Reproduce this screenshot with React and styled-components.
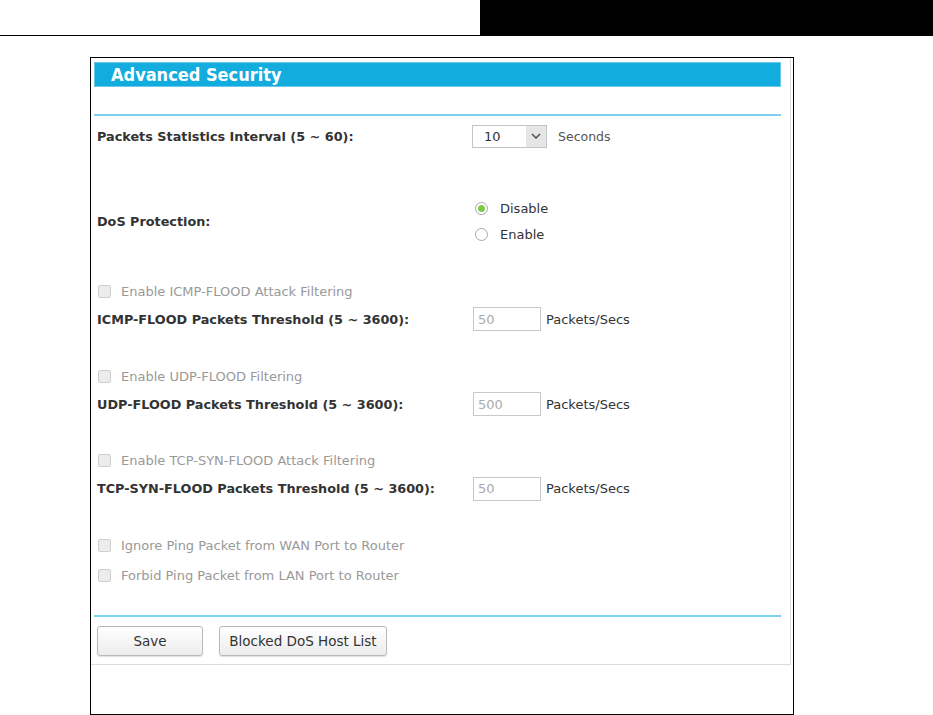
import React from 'react';
import styled, { createGlobalStyle } from 'styled-components';

const GlobalStyle = createGlobalStyle`
  body {
    margin: 0;
    background: #ffffff;
    font-family: "DejaVu Sans", "Liberation Sans", sans-serif;
  }
`;

const TopBar = styled.div`
  display: flex;
  height: 36px;
`;

const TopLeft = styled.div`
  width: 480px;
  border-bottom: 1px solid #000;
`;

const TopRight = styled.div`
  flex: 1;
  background: #000;
`;

const Frame = styled.div`
  margin: 21px 0 0 90px;
  width: 702px;
  height: 656px;
  border: 1px solid #000;
`;

const Inner = styled.div`
  width: 699px;
  height: 606px;
  border-right: 1px solid #dcdcdc;
  border-bottom: 1px solid #dcdcdc;
  display: flex;
  flex-direction: column;
`;

const Header = styled.div`
  margin: 4px 9px 0 3px;
  height: 25px;
  box-sizing: border-box;
  background: #12acdf;
  border: 1px solid #6cc9ec;
  color: #fff;
  font-family: "DejaVu Sans Condensed", "DejaVu Sans", sans-serif;
  font-weight: bold;
  font-size: 18px;
  display: flex;
  align-items: center;
  padding-left: 16px;
`;

const Divider = styled.div`
  margin: ${p => p.$top}px 9px 0 3px;
  height: 2px;
  background: #7dd0f0;
`;

const Row = styled.div`
  display: flex;
  align-items: center;
  height: ${p => p.$h || 28}px;
  margin-top: ${p => p.$top || 0}px;
  padding-left: 6px;
`;

const Label = styled.div`
  width: 375px;
  flex-shrink: 0;
  font-weight: bold;
  font-size: 12.8px;
  color: #333;
`;

const Controls = styled.div`
  display: flex;
  flex-direction: ${p => (p.$column ? 'column' : 'row')};
  align-items: ${p => (p.$column ? 'flex-start' : 'center')};
`;

const SelectBox = styled.div`
  display: flex;
  width: 75px;
  height: 23px;
  box-sizing: border-box;
  border: 1px solid #c4c4c4;
  font-size: 13px;
  color: #333;
`;

const SelectValue = styled.div`
  flex: 1;
  display: flex;
  align-items: center;
  padding-left: 11px;
`;

const SelectArrow = styled.div`
  width: 20px;
  background: #e6e6e6;
  display: flex;
  align-items: center;
  justify-content: center;
`;

const Unit = styled.span`
  font-size: ${p => (p.$dark ? 13 : 12.5)}px;
  color: ${p => (p.$dark ? '#333' : '#555')};
  margin-left: ${p => p.$gap}px;
`;

const RadioLine = styled.label`
  display: flex;
  align-items: center;
  height: 26px;
  padding-left: 3px;
  font-size: 13px;
  color: #333;
`;

const RadioDot = styled.span`
  width: 11px;
  height: 11px;
  border-radius: 50%;
  border: 1px solid #a8a8a8;
  background: #fff;
  margin-right: 12px;
  display: flex;
  align-items: center;
  justify-content: center;

  &::after {
    content: '';
    width: 7px;
    height: 7px;
    border-radius: 50%;
    background: ${p => (p.$on ? '#7ccb48' : 'transparent')};
  }
`;

const CheckLine = styled.label`
  display: flex;
  align-items: center;
  height: ${p => p.$h || 28}px;
  margin-top: ${p => p.$top || 0}px;
  padding-left: 7px;
  font-size: 13px;
  color: #999;
`;

const CheckBox = styled.span`
  width: 11px;
  height: 11px;
  border: 1px solid #cfcfcf;
  border-radius: 2px;
  background: #ececec;
  margin-right: 10px;
`;

const NumInput = styled.div`
  width: 68px;
  height: 24px;
  box-sizing: border-box;
  border: 1px solid #c8c8c8;
  margin-left: 1px;
  font-size: 13px;
  color: #aaa;
  display: flex;
  align-items: center;
  padding-left: 4px;
`;

const ButtonBar = styled.div`
  display: flex;
  gap: 16px;
  margin-top: 9px;
  padding-left: 6px;
`;

const Button = styled.button`
  width: ${p => p.$w}px;
  height: 30px;
  border: 1px solid #b9b9b9;
  border-radius: 3px;
  background: linear-gradient(#ffffff, #ececec);
  box-shadow: 0 1px 1px rgba(0, 0, 0, 0.12);
  font-family: "DejaVu Sans", "Liberation Sans", sans-serif;
  font-size: 13.5px;
  color: #333;
  padding: 0;
`;

const Chevron = () => (
  <svg width="10" height="6" viewBox="0 0 10 6">
    <path d="M1 1 L5 5 L9 1" fill="none" stroke="#555" strokeWidth="1.6" />
  </svg>
);

const floods = [
  { check: 'Enable ICMP-FLOOD Attack Filtering', label: 'ICMP-FLOOD Packets Threshold (5 ~ 3600):', value: '50', top: 30 },
  { check: 'Enable UDP-FLOOD Filtering', label: 'UDP-FLOOD Packets Threshold (5 ~ 3600):', value: '500', top: 29 },
  { check: 'Enable TCP-SYN-FLOOD Attack Filtering', label: 'TCP-SYN-FLOOD Packets Threshold (5 ~ 3600):', value: '50', top: 28 },
];

export default function App() {
  return (
    <>
      <GlobalStyle />
      <TopBar>
        <TopLeft />
        <TopRight />
      </TopBar>
      <Frame>
        <Inner>
          <Header>Advanced Security</Header>
          <Divider $top={27} />

          <Row $h={40}>
            <Label>Packets Statistics Interval (5 ~ 60):</Label>
            <Controls>
              <SelectBox>
                <SelectValue>10</SelectValue>
                <SelectArrow><Chevron /></SelectArrow>
              </SelectBox>
              <Unit $gap={11}>Seconds</Unit>
            </Controls>
          </Row>

          <Row $h={52} $top={39}>
            <Label>DoS Protection:</Label>
            <Controls $column>
              <RadioLine><RadioDot $on />Disable</RadioLine>
              <RadioLine><RadioDot />Enable</RadioLine>
            </Controls>
          </Row>

          {floods.map(f => (
            <React.Fragment key={f.check}>
              <CheckLine $top={f.top}><CheckBox />{f.check}</CheckLine>
              <Row $h={f.top === 28 ? 29 : 28}>
                <Label>{f.label}</Label>
                <Controls>
                  <NumInput>{f.value}</NumInput>
                  <Unit $dark $gap={5}>Packets/Secs</Unit>
                </Controls>
              </Row>
            </React.Fragment>
          ))}

          <CheckLine $h={30} $top={27}><CheckBox />Ignore Ping Packet from WAN Port to Router</CheckLine>
          <CheckLine $h={30}><CheckBox />Forbid Ping Packet from LAN Port to Router</CheckLine>

          <Divider $top={25} />
          <ButtonBar>
            <Button $w={106}>Save</Button>
            <Button $w={168}>Blocked DoS Host List</Button>
          </ButtonBar>
        </Inner>
      </Frame>
    </>
  );
}
